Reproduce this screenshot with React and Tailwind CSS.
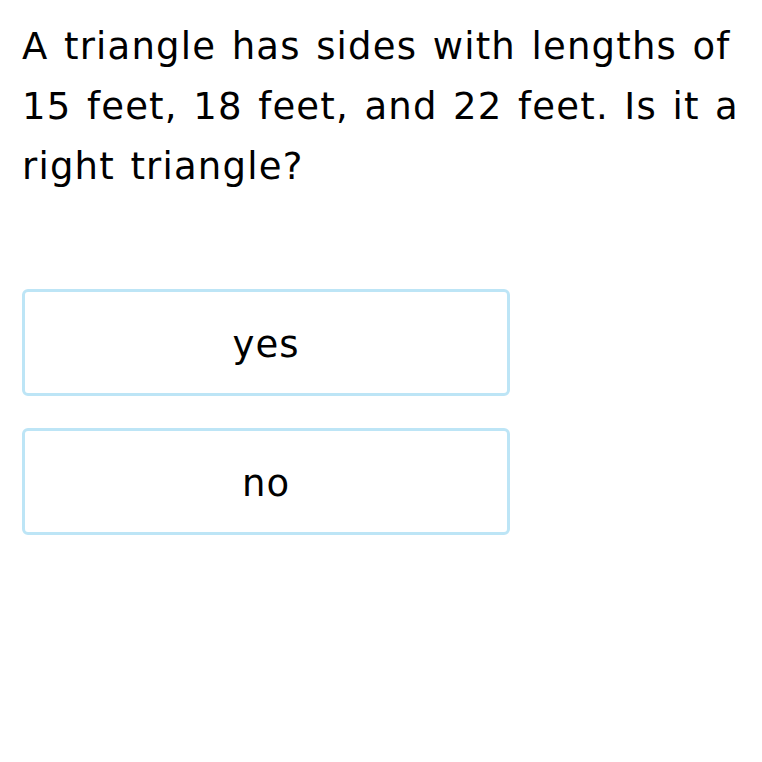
export default function App() {
  const choices = ["yes", "no"];
  return (
    <main className="w-[762px] h-[762px] bg-white text-black font-['DejaVu_Sans',Verdana,sans-serif]">
      <div className="pl-[22px] pr-2 pt-[17px]">
        <p className="text-[37px] leading-[60px] tracking-[1.2px] [word-spacing:2.5px]">
          A triangle has sides with lengths of 15 feet, 18 feet, and 22 feet. Is it a right triangle?
        </p>
        <div className="mt-[92px] flex flex-col gap-[32px] w-[488px]">
          {choices.map((c) => (
            <button
              key={c}
              className="h-[107px] rounded-[6px] border-[3px] border-[#bde5f6] bg-white text-[37px] tracking-[1px] pt-[4px] flex items-center justify-center"
            >
              {c}
            </button>
          ))}
        </div>
      </div>
    </main>
  );
}
